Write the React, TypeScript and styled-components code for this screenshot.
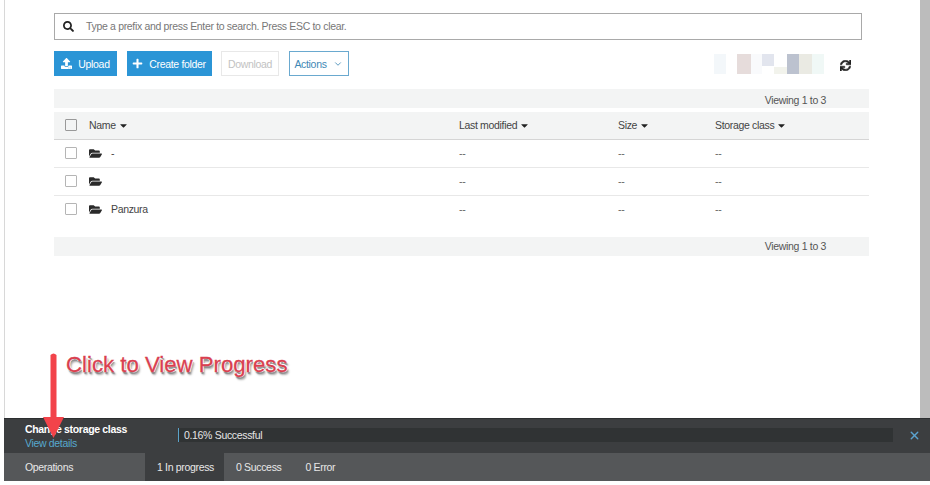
import React from 'react';
import styled, { createGlobalStyle } from 'styled-components';
import { FaCaretDown, FaFolderOpen, FaPlus, FaSearch, FaSync, FaUpload } from 'react-icons/fa';
import { ChevronDown, X } from 'lucide-react';

const folders = ['-', '', 'Panzura'];
const tabs = ['1 In progress', '0 Success', '0 Error'];
const mosaic = [
    { width: 12, height: 20, color: '#f3f7fa', align: 'flex-end' },
    { width: 11, height: 20, color: '#ffffff', align: 'flex-end' },
    { width: 14, height: 20, color: '#e6dcdb', align: 'flex-end' },
    { width: 11, height: 20, color: '#f9fafc', align: 'flex-end' },
    { width: 12, height: 12, color: '#e2e5ee', align: 'flex-start' },
    { width: 13, height: 7, color: '#f2f3ec', align: 'flex-end' },
    { width: 12, height: 20, color: '#bcc2cf', align: 'flex-end' },
    { width: 13, height: 20, color: '#eaeae3', align: 'flex-end' },
    { width: 12, height: 20, color: '#f0f8f6', align: 'flex-end' },
];

const GlobalStyle = createGlobalStyle`
    html, body {
        margin: 0;
        background: #fff;
    }
    body {
        font-family: 'Liberation Sans', Arial, sans-serif;
        font-size: 10.5px;
        letter-spacing: -0.33px;
        color: #444;
    }
`;

const Page = styled.div`
    position: relative;
    width: 930px;
    height: 485px;
    padding: 0 0 4px 4px;
    box-sizing: border-box;
    display: flex;
    flex-direction: column;
    overflow: hidden;
`;

const Top = styled.div`
    flex: 1;
    display: flex;
    min-height: 0;
`;

const Main = styled.main`
    flex: 1;
    border-left: 1px solid #d8d8d8;
    padding: 13px 51px 0 49px;
`;

const Scrollbar = styled.div`
    width: 10px;
    background: #bcbcbc;
`;

const Search = styled.div`
    width: 808px;
    height: 27px;
    box-sizing: border-box;
    border: 1px solid #a9a9a9;
    display: flex;
    align-items: center;
    gap: 12px;
    padding: 0 0 1px 8px;
    color: #777;
    svg {
        color: #222;
        font-size: 11px;
    }
`;

const Toolbar = styled.div`
    margin-top: 11px;
    height: 25px;
    display: flex;
    align-items: stretch;
    gap: 9.5px;
`;

const Button = styled.div<{ $kind: 'primary' | 'disabled' | 'outline'; $width: number }>`
    width: ${p => p.$width}px;
    box-sizing: border-box;
    display: flex;
    align-items: center;
    justify-content: center;
    gap: 6px;
    background: ${p => (p.$kind === 'primary' ? '#2b95d6' : '#fff')};
    color: ${p => (p.$kind === 'primary' ? '#fff' : p.$kind === 'disabled' ? '#c2c2c2' : '#3f88b5')};
    border: 1px solid ${p => (p.$kind === 'primary' ? '#2b95d6' : p.$kind === 'disabled' ? '#e8e8e8' : '#6aa9cf')};
    svg {
        font-size: 11px;
    }
`;

const ToolbarRight = styled.div`
    margin-left: auto;
    display: flex;
    align-items: center;
    gap: 16px;
    padding-right: 18px;
    svg {
        color: #222;
        font-size: 11px;
        margin-top: 4px;
        stroke: currentColor;
        stroke-width: 24;
    }
`;

const Mosaic = styled.div`
    display: flex;
    height: 20px;
    filter: blur(0.6px);
`;

const Swatch = styled.div<{ $width: number; $height: number; $color: string; $align: string }>`
    width: ${p => p.$width}px;
    height: ${p => p.$height}px;
    align-self: ${p => p.$align};
    background: ${p => p.$color};
`;

const Pager = styled.div<{ $top: number; $shift: number }>`
    margin-top: ${p => p.$top}px;
    height: 19px;
    box-sizing: border-box;
    padding: ${p => Math.max(p.$shift, 0)}px 43px ${p => Math.max(-p.$shift, 0)}px 0;
    background: #f3f4f4;
    display: flex;
    align-items: center;
    justify-content: flex-end;
    color: #555;
`;

const Row = styled.div<{ $head?: boolean; $last?: boolean }>`
    display: grid;
    grid-template-columns: 24px 370px 159px 97px 1fr;
    align-items: center;
    height: 28px;
    box-sizing: border-box;
    padding: 0 0 1px 11px;
    background: ${p => (p.$head ? '#f3f4f4' : '#fff')};
    border-bottom: 1px solid ${p => (p.$last ? 'transparent' : p.$head ? '#d5d5d5' : '#e8e8e8')};
    color: ${p => (p.$head ? '#444' : '#666')};
`;

const TableHead = styled(Row)`
    margin-top: 4px;
`;

const Checkbox = styled.span<{ $head?: boolean }>`
    width: 12px;
    height: 12px;
    box-sizing: border-box;
    border: 1px solid ${p => (p.$head ? '#999' : '#b5b5b5')};
    border-radius: 1px;
`;

const SortLabel = styled.span`
    display: flex;
    align-items: center;
    gap: 2px;
    svg {
        color: #222;
        font-size: 11px;
    }
`;

const Name = styled.span`
    display: flex;
    align-items: center;
    gap: 9px;
    color: #444;
    svg {
        color: #2a2a2a;
        font-size: 13px;
    }
`;

const Panel = styled.section`
    height: 63px;
    flex: none;
    background: #3c3e40;
    color: #fff;
    display: flex;
    flex-direction: column;
`;

const Status = styled.div`
    height: 35px;
    display: flex;
    align-items: center;
    padding: 0 0 2px 21px;
    border-top: 1px solid #2c2e30;
    box-sizing: border-box;
`;

const Job = styled.div`
    width: 153px;
    margin-top: 2px;
    display: flex;
    flex-direction: column;
    gap: 3px;
    line-height: 11px;
`;

const JobTitle = styled.strong`
    font-weight: bold;
`;

const JobLink = styled.span`
    color: #57a9cf;
`;

const Progress = styled.div`
    flex: 1;
    height: 14px;
    background: #303334;
    border-left: 1px solid #5ba3c9;
    color: #e6e6e6;
    display: flex;
    align-items: center;
    padding-left: 5px;
`;

const Close = styled.span`
    width: 37px;
    box-sizing: border-box;
    padding-right: 9px;
    display: flex;
    justify-content: flex-end;
    color: #5ba3d0;
`;

const TabBar = styled.div`
    flex: 1;
    display: flex;
    background: #555759;
    color: #e8e8e8;
`;

const TabTitle = styled.div`
    width: 141px;
    padding-left: 21px;
    box-sizing: border-box;
    display: flex;
    align-items: center;
`;

const Tab = styled.div<{ $active?: boolean }>`
    display: flex;
    align-items: center;
    padding: 0 ${p => (p.$active ? 10 : 12)}px 0 12px;
    background: ${p => (p.$active ? '#3c3e40' : 'transparent')};
`;

// red callout pasted over the screenshot
const Callout = styled.div`
    position: absolute;
    left: 66px;
    top: 352px;
    font-size: 22.2px;
    letter-spacing: 0;
    line-height: 26px;
    color: #d9404f;
    -webkit-text-stroke: 0.3px #d9404f;
    text-shadow: 1px 0 0 #fff, -1px 0 0 #fff, 0 -1px 0 #fff, 1px 2px 1px #8a8a8a, 2px 3px 2px #aaa;
`;

const CalloutArrow = styled.svg`
    position: absolute;
    left: 42px;
    top: 352px;
`;

const App = () => (
    <Page>
        <GlobalStyle />
        <Top>
            <Main>
                <Search>
                    <FaSearch />
                    Type a prefix and press Enter to search. Press ESC to clear.
                </Search>
                <Toolbar>
                    <Button $kind="primary" $width={63}>
                        <FaUpload />
                        Upload
                    </Button>
                    <Button $kind="primary" $width={85}>
                        <FaPlus />
                        Create folder
                    </Button>
                    <Button $kind="disabled" $width={58}>
                        Download
                    </Button>
                    <Button $kind="outline" $width={60}>
                        Actions
                        <ChevronDown size={10} />
                    </Button>
                    <ToolbarRight>
                        <Mosaic>
                            {mosaic.map((item, i) => (
                                <Swatch
                                    key={i}
                                    $width={item.width}
                                    $height={item.height}
                                    $color={item.color}
                                    $align={item.align}
                                />
                            ))}
                        </Mosaic>
                        <FaSync />
                    </ToolbarRight>
                </Toolbar>
                <Pager $top={13} $shift={2}>
                    Viewing 1 to 3
                </Pager>
                <TableHead $head>
                    <Checkbox $head />
                    <SortLabel>
                        Name <FaCaretDown />
                    </SortLabel>
                    <SortLabel>
                        Last modified <FaCaretDown />
                    </SortLabel>
                    <SortLabel>
                        Size <FaCaretDown />
                    </SortLabel>
                    <SortLabel>
                        Storage class <FaCaretDown />
                    </SortLabel>
                </TableHead>
                {folders.map((folder, i) => (
                    <Row key={folder} $last={i === folders.length - 1}>
                        <Checkbox />
                        <Name>
                            <FaFolderOpen />
                            {folder}
                        </Name>
                        <span>--</span>
                        <span>--</span>
                        <span>--</span>
                    </Row>
                ))}
                <Pager $top={13} $shift={-1}>
                    Viewing 1 to 3
                </Pager>
            </Main>
            <Scrollbar />
        </Top>
        <Panel>
            <Status>
                <Job>
                    <JobTitle>Change storage class</JobTitle>
                    <JobLink>View details</JobLink>
                </Job>
                <Progress>0.16% Successful</Progress>
                <Close>
                    <X size={13} strokeWidth={2.5} />
                </Close>
            </Status>
            <TabBar>
                <TabTitle>Operations</TabTitle>
                {tabs.map((tab, i) => (
                    <Tab key={tab} $active={i === 0}>
                        {tab}
                    </Tab>
                ))}
            </TabBar>
        </Panel>
        <Callout>Click to View Progress</Callout>
        <CalloutArrow width="24" height="88" viewBox="0 0 24 88">
            <path d="M8.5 3 Q11.5 0 14.5 3 V65 H22 L11.5 86 L1 65 H8.5 Z" fill="#f2434a" />
        </CalloutArrow>
    </Page>
);

export default App;
